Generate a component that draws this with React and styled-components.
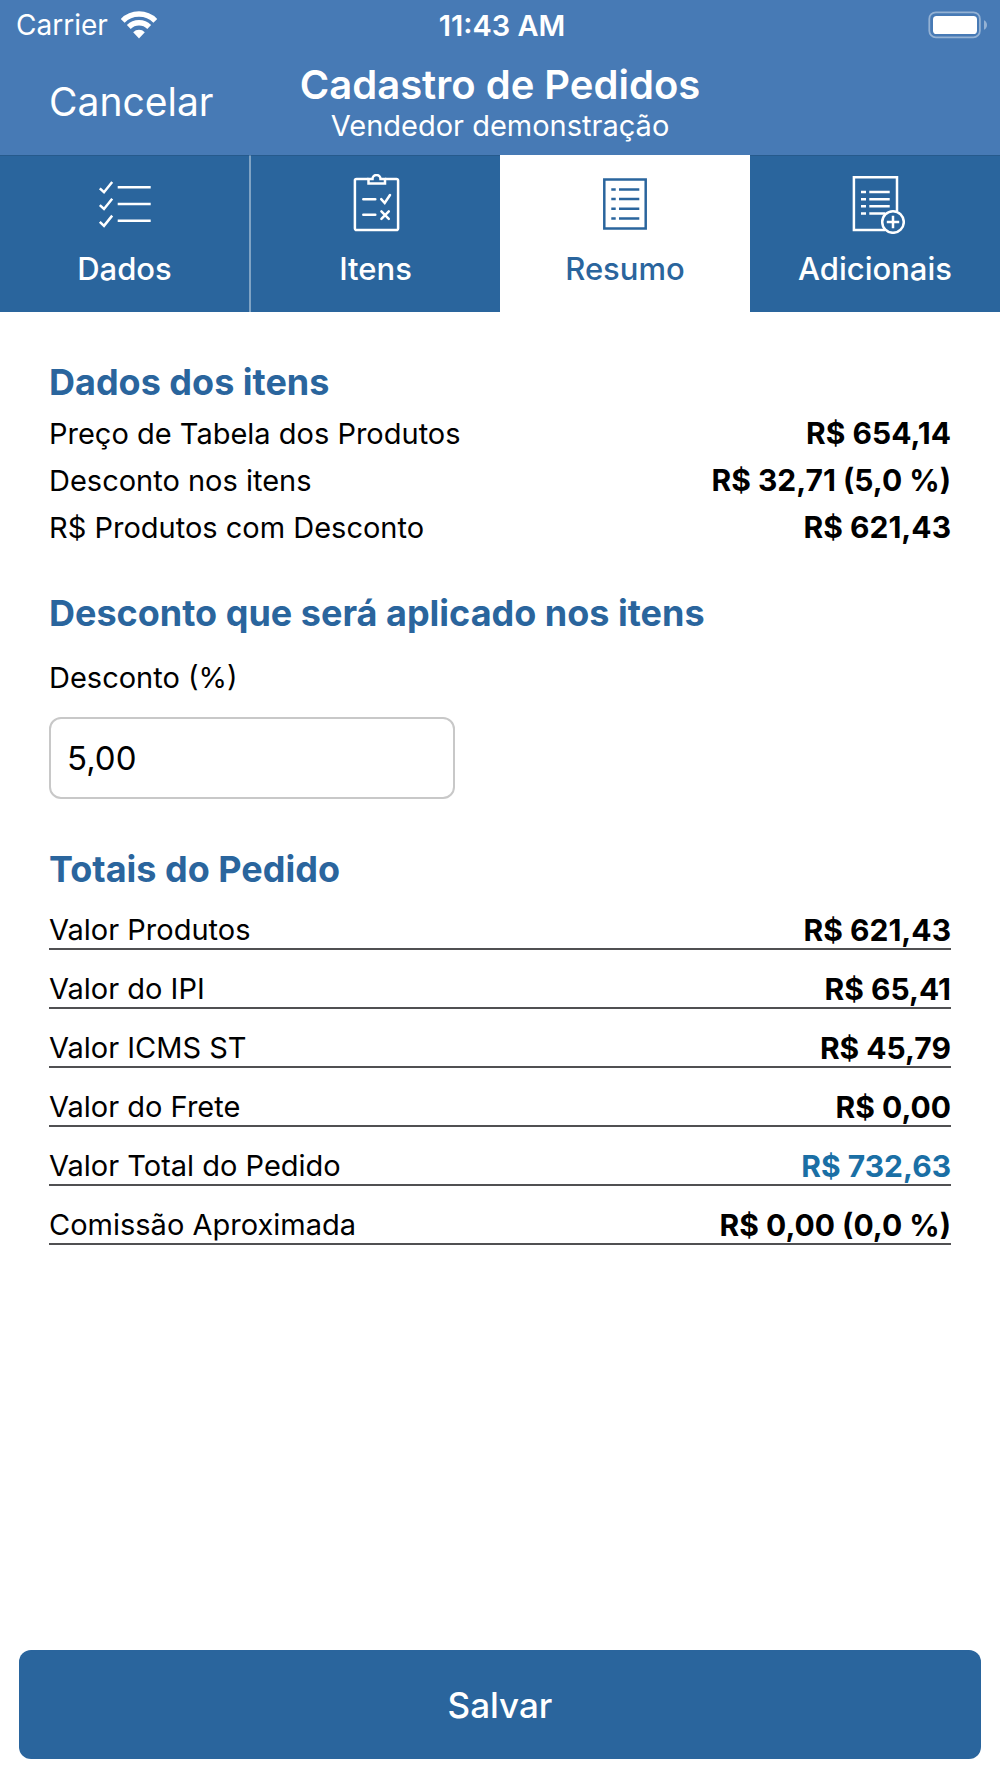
import React, { useState } from 'react';
import styled, { createGlobalStyle } from 'styled-components';

const itemRows = [
    { label: 'Preço de Tabela dos Produtos', value: 'R$ 654,14' },
    { label: 'Desconto nos itens', value: 'R$ 32,71 (5,0 %)' },
    { label: 'R$ Produtos com Desconto', value: 'R$ 621,43' },
];

const totalRows = [
    { label: 'Valor Produtos', value: 'R$ 621,43' },
    { label: 'Valor do IPI', value: 'R$ 65,41' },
    { label: 'Valor ICMS ST', value: 'R$ 45,79' },
    { label: 'Valor do Frete', value: 'R$ 0,00' },
    { label: 'Valor Total do Pedido', value: 'R$ 732,63', highlight: true },
    { label: 'Comissão Aproximada', value: 'R$ 0,00 (0,0 %)' },
];

const tabs = [
    { id: 'dados', label: 'Dados', Icon: DadosIcon },
    { id: 'itens', label: 'Itens', Icon: ItensIcon },
    { id: 'resumo', label: 'Resumo', Icon: ResumoIcon },
    { id: 'adicionais', label: 'Adicionais', Icon: AdicionaisIcon },
];

function App() {
    const [activeTab, setActiveTab] = useState('resumo');
    const [discount, setDiscount] = useState('5,00');

    return (
        <StPage>
            <GlobalStyle />
            <StHeader>
                <StatusBar />
                <StNav>
                    <StCancel type="button">Cancelar</StCancel>
                    <div>
                        <StTitle>Cadastro de Pedidos</StTitle>
                        <StSubtitle>Vendedor demonstração</StSubtitle>
                    </div>
                </StNav>
            </StHeader>
            <StTabs>
                {tabs.map(({ id, label, Icon }) => (
                    <StTab
                        key={id}
                        type="button"
                        aria-pressed={id === activeTab}
                        $active={id === activeTab}
                        onClick={() => setActiveTab(id)}
                    >
                        <Icon />
                        {label}
                    </StTab>
                ))}
            </StTabs>
            <StMain>
                <StHeading>Dados dos itens</StHeading>
                <StTable>
                    <tbody>
                        {itemRows.map((row) => (
                            <tr key={row.label}>
                                <StLabel scope="row">{row.label}</StLabel>
                                <StValue>{row.value}</StValue>
                            </tr>
                        ))}
                    </tbody>
                </StTable>

                <StHeading>Desconto que será aplicado nos itens</StHeading>
                <StFieldLabel htmlFor="desconto">Desconto (%)</StFieldLabel>
                <StInput
                    id="desconto"
                    inputMode="decimal"
                    value={discount}
                    onChange={(e) => setDiscount(e.target.value)}
                />

                <StHeading>Totais do Pedido</StHeading>
                <StTable $lined>
                    <tbody>
                        {totalRows.map((row) => (
                            <tr key={row.label}>
                                <StLabel scope="row">{row.label}</StLabel>
                                <StValue $highlight={row.highlight}>
                                    {row.value}
                                </StValue>
                            </tr>
                        ))}
                    </tbody>
                </StTable>
            </StMain>
            <StFooter>
                <StSave type="button">Salvar</StSave>
            </StFooter>
        </StPage>
    );
}

export default App;

function StatusBar() {
    return (
        <StStatus>
            <StCarrier>
                Carrier
                <svg width="38" height="28" viewBox="0 0 38 28" fill="none">
                    <g stroke="#fff" strokeWidth="5.4">
                        <path d="M2.7 9.8a23 23 0 0 1 32.6 0" />
                        <path d="M8.8 16a14.4 14.4 0 0 1 20.4 0" />
                    </g>
                    <path d="M19 27.5l-5.8-6.3a8.3 8.3 0 0 1 11.6 0z" fill="#fff" />
                </svg>
            </StCarrier>
            <StTime>11:43 AM</StTime>
            <StBattery>
                <svg width="60" height="28" viewBox="0 0 60 28" fill="#fff">
                    <rect
                        x="1.3"
                        y="1.3"
                        width="50.6"
                        height="25"
                        rx="6.6"
                        fill="none"
                        stroke="#fff"
                        strokeWidth="1.8"
                        opacity=".42"
                    />
                    <rect x="5" y="5" width="44" height="18" rx="3.6" />
                    <path d="M56 9.2c4 1.8 4 7.8 0 9.6z" opacity=".42" />
                </svg>
            </StBattery>
        </StStatus>
    );
}

function DadosIcon() {
    return (
        <StIcon viewBox="0 0 60 60">
            <path d="M4.8 14.3l4.2 3.9 8.2-10.2M4.8 31.1l4.2 3.9 8.2-10.2M4.8 47.9l4.2 3.9 8.2-10.2" />
            <path d="M22.7 13.3h33M22.7 29.9h33M22.7 46.7h33" />
        </StIcon>
    );
}

function ItensIcon() {
    return (
        <StIcon viewBox="0 0 60 60">
            <path d="M22.5 5H10.5a1.6 1.6 0 0 0-1.6 1.6v47.8a1.6 1.6 0 0 0 1.6 1.6h40a1.6 1.6 0 0 0 1.6-1.6V6.6A1.6 1.6 0 0 0 50.5 5H39" />
            <path d="M22.5 5h4a4 4 0 0 1 8 0H39v4.4H22.5z" />
            <path d="M17.3 25.3h12M17.3 40.7h12" strokeLinecap="round" />
            <path
                d="M35.2 25.2l3.5 3.8 5.3-8M35.4 37.4l7.4 7.4M42.8 37.4l-7.4 7.4"
                strokeLinecap="round"
            />
        </StIcon>
    );
}

function ResumoIcon() {
    return (
        <StIcon viewBox="0 0 60 60">
            <rect x="9.3" y="5.5" width="41.4" height="49" />
            <path d="M16.3 15.4h4.4M16.3 25.1h4.4M16.3 34.7h4.4M16.3 44.4h4.4" />
            <path d="M24 15.4h20.3M24 25.1h20.3M24 34.7h20.3M24 44.4h20.3" />
        </StIcon>
    );
}

function AdicionaisIcon() {
    return (
        <StIcon viewBox="0 0 60 60">
            <path d="M52 37V3.3H8.9V56H40" />
            <path d="M16 18h5M16 25.3h5M16 32.3h5M16 39.5h5" />
            <path d="M24.3 18h20.4M24.3 25.3h20.4M24.3 32.3h20.4M24.3 39.5h16" />
            <circle cx="48" cy="48" r="10.8" />
            <path d="M48 41.8v12.4M41.8 48h12.4" />
        </StIcon>
    );
}

const GlobalStyle = createGlobalStyle`
    * {
        box-sizing: border-box;
    }

    body {
        margin: 0;
        background: #fff;
        color: #000;
        font-family: Inter, 'Liberation Sans', sans-serif;
    }

    button,
    input {
        font-family: inherit;
    }
`;

const StPage = styled.div`
    display: flex;
    flex-direction: column;
    min-height: 100vh;
`;

const StHeader = styled.header`
    background: #477ab5;
    color: #fff;
`;

const StStatus = styled.div`
    display: grid;
    grid-template-columns: 1fr auto 1fr;
    align-items: center;
    height: 50px;
    padding: 0 12px 0 16px;
    font-size: 28px;
`;

const StCarrier = styled.div`
    display: flex;
    align-items: center;
    gap: 12px;
`;

const StTime = styled.div`
    font-size: 29px;
    font-weight: 600;
`;

const StBattery = styled.div`
    display: flex;
    justify-content: flex-end;
`;

const StNav = styled.div`
    display: grid;
    grid-template-columns: 1fr auto 1fr;
    align-items: start;
    padding: 13px 49px 10px;
    text-align: center;
`;

const StCancel = styled.button`
    justify-self: start;
    padding: 0;
    border: 0;
    background: none;
    color: #fff;
    font-size: 39px;
    line-height: 78px;
    cursor: pointer;
`;

const StTitle = styled.h1`
    margin: 0;
    font-size: 40px;
    font-weight: 600;
    line-height: 44px;
`;

const StSubtitle = styled.p`
    margin: 0;
    font-size: 29px;
    line-height: 38px;
`;

const StTabs = styled.nav`
    display: grid;
    grid-template-columns: repeat(4, 1fr);
`;

const StTab = styled.button`
    display: flex;
    flex-direction: column;
    align-items: center;
    gap: 16px;
    height: 157px;
    padding: 18px 0 0;
    border: 0;
    border-top: 1px solid ${(props) => (props.$active ? '#fff' : '#265a8c')};
    background: ${(props) => (props.$active ? '#fff' : '#2a659d')};
    color: ${(props) => (props.$active ? '#2a659d' : '#fff')};
    font-size: 31px;
    font-weight: 500;
    line-height: 38px;
    cursor: pointer;

    &:first-child {
        border-right: 1px solid #7fa3c4;
    }

    &:nth-child(2) {
        border-left: 1px solid #7fa3c4;
    }
`;

const StIcon = styled.svg`
    width: 60px;
    height: 60px;
    fill: none;
    stroke: currentColor;
    stroke-width: 2.5;
`;

const StMain = styled.main`
    flex: 1;
    padding: 8px 49px 0;
`;

const StHeading = styled.h2`
    margin: 40px 0 0;
    color: #2a659d;
    font-size: 36px;
    font-weight: 700;
    line-height: 44px;
`;

const StLabel = styled.th`
    padding: 0;
    font-size: 29px;
    font-weight: 400;
    text-align: left;
`;

const StValue = styled.td`
    padding: 0;
    color: ${(props) => (props.$highlight ? '#1a6fa5' : '#000')};
    font-size: 30px;
    font-weight: 700;
    text-align: right;
`;

const StTable = styled.table`
    width: 100%;
    margin-top: ${(props) => (props.$lined ? '0' : '6px')};
    border-collapse: collapse;
    line-height: ${(props) => (props.$lined ? '36px' : '47px')};

    ${StLabel}, ${StValue} {
        padding-top: ${(props) => (props.$lined ? '21px' : '0')};
        border-bottom: ${(props) => (props.$lined ? '2px solid #505052' : '0')};
    }
`;

const StFieldLabel = styled.label`
    display: block;
    padding: 19px 0 16px;
    font-size: 29px;
    line-height: 47px;
`;

const StInput = styled.input`
    display: block;
    width: 45%;
    height: 82px;
    margin-bottom: 48px;
    padding: 0 16px;
    border: 2px solid #c8c8c8;
    border-radius: 12px;
    background: #fff;
    color: #000;
    font-size: 33px;
`;

const StFooter = styled.footer`
    padding: 19px;
`;

const StSave = styled.button`
    width: 100%;
    height: 109px;
    border: 0;
    border-radius: 12px;
    background: #2a659d;
    color: #fff;
    font-size: 35px;
    font-weight: 500;
    cursor: pointer;
`;
